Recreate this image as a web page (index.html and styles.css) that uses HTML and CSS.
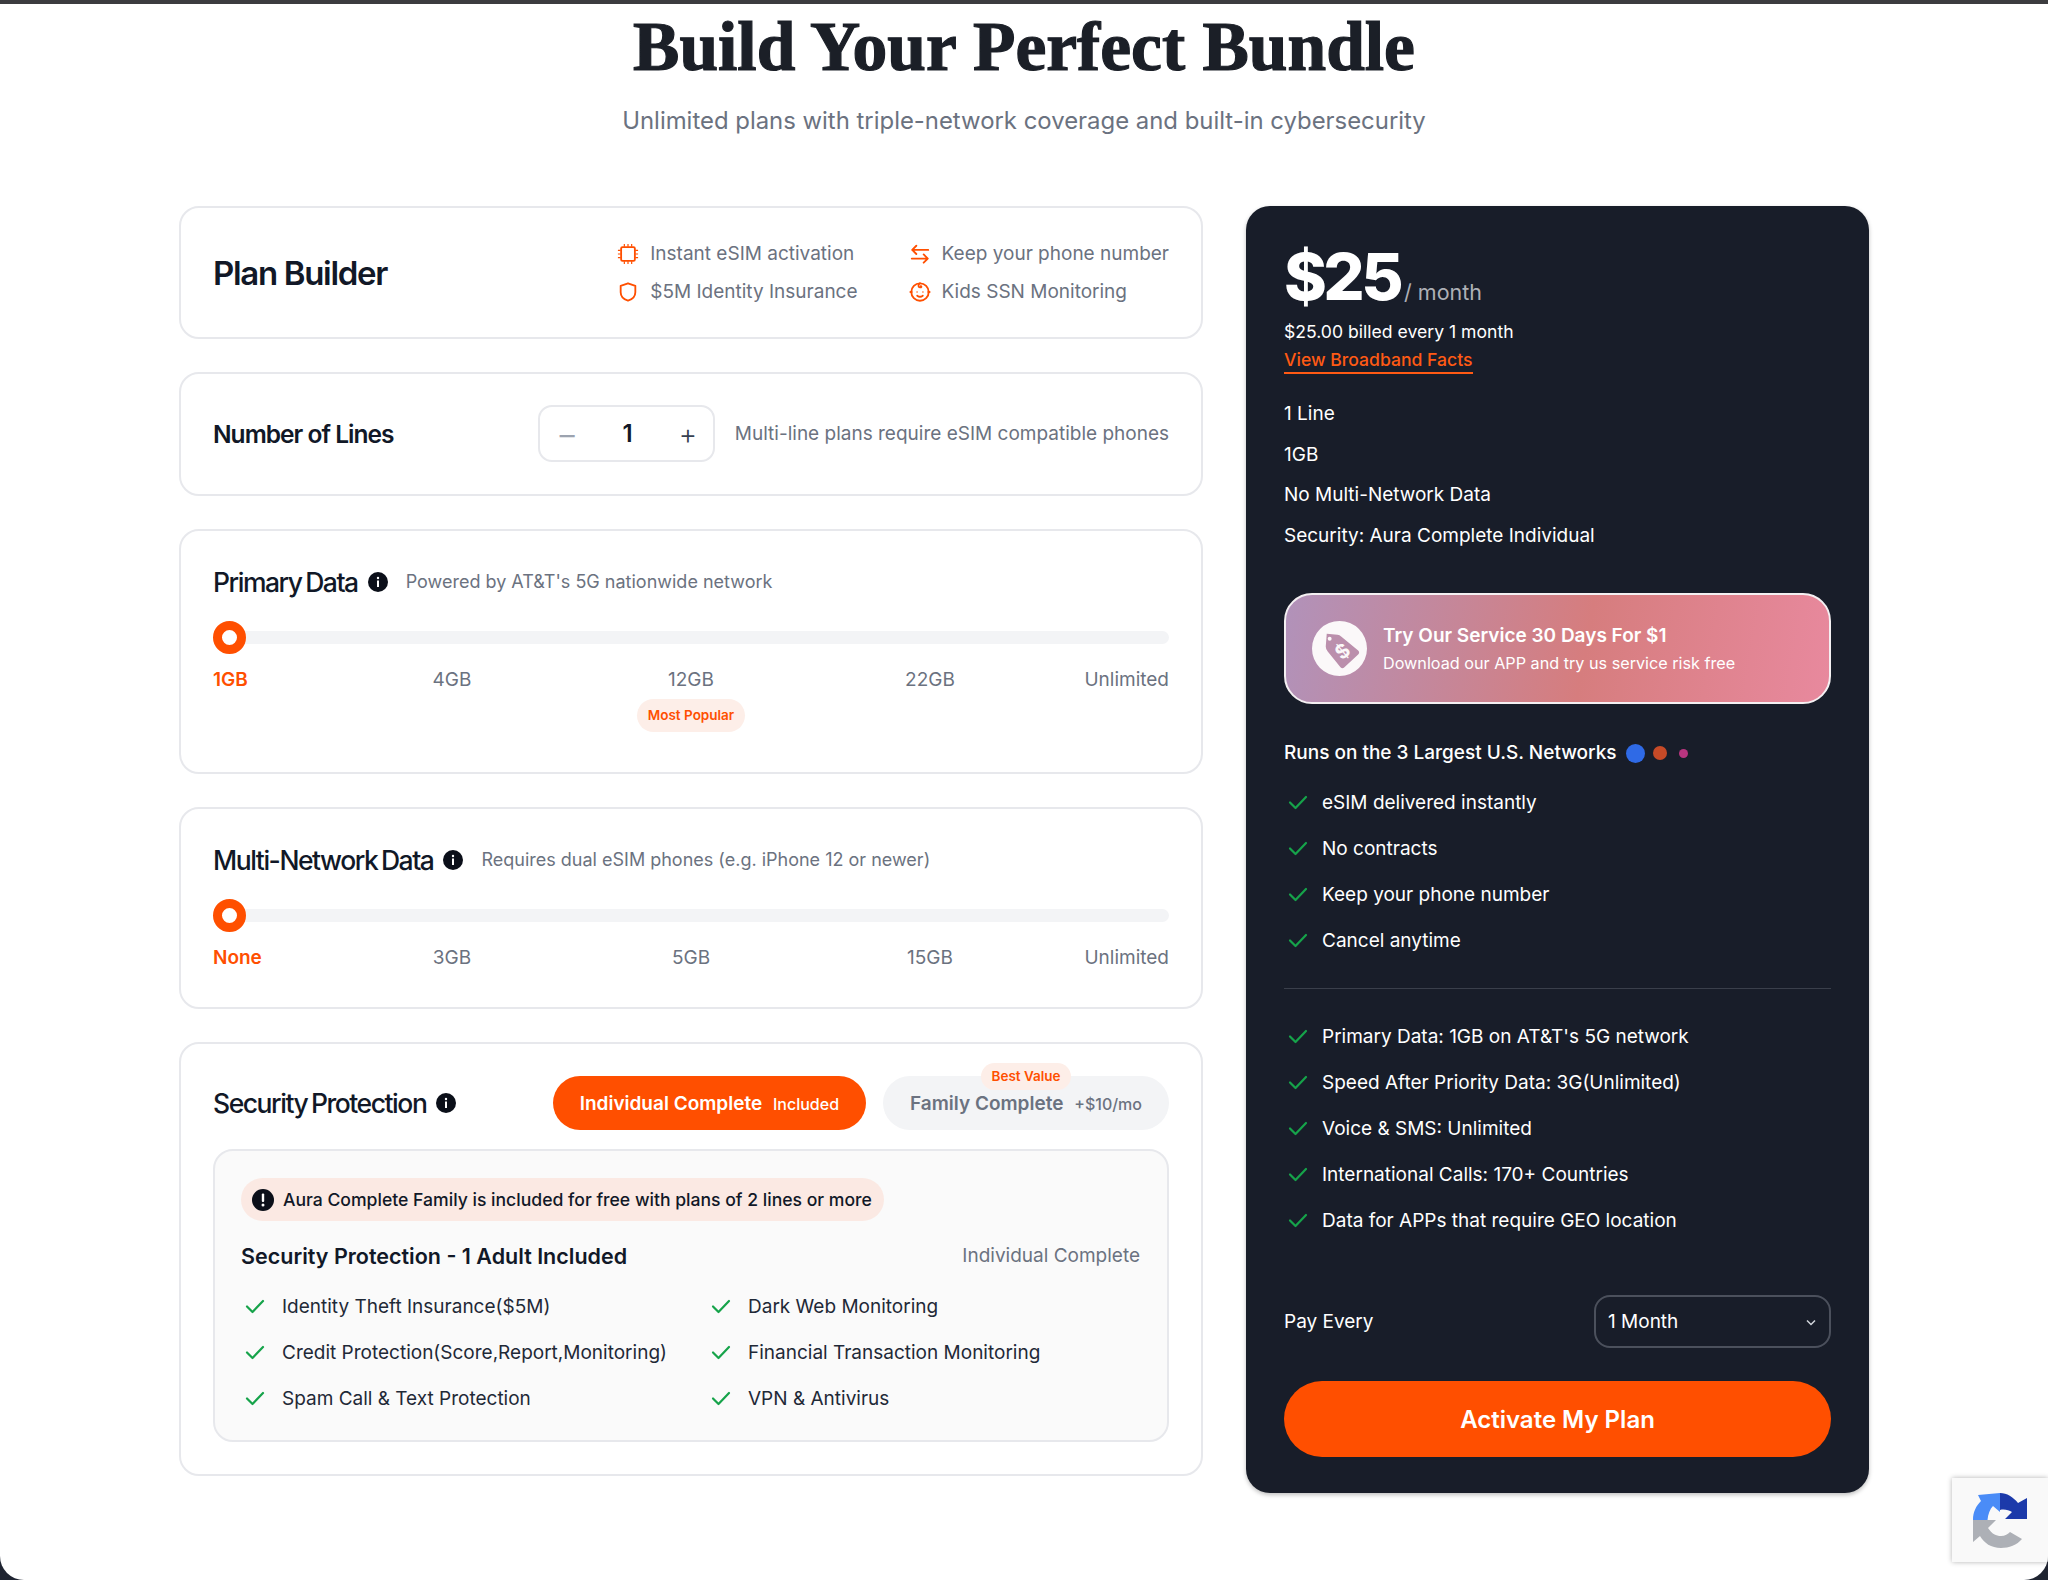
FILE: index.html
```html
<!DOCTYPE html>
<html lang="en">
<head>
  <meta charset="UTF-8">
  <meta name="viewport" content="width=device-width, initial-scale=1.0">
  <title>Build Your Perfect Bundle</title>
  <link rel="stylesheet" href="styles.css">
</head>
<body>
  <div class="page">
    <header class="hero">
      <h1>Build Your Perfect Bundle</h1>
      <p>Unlimited plans with triple-network coverage and built-in cybersecurity</p>
    </header>

    <main class="layout">
      <div class="builder">
        <section class="card plan-card">
          <h2 class="plan-title">Plan Builder</h2>
          <ul class="perks">
            <li>
              <svg class="perk-icon" viewBox="0 0 24 24"><rect x="4.500" y="4.500" width="15" height="15" rx="1.500"/><path class="pins" d="M8 1v3M12 1v3M16 1v3M8 20v3M12 20v3M16 20v3M1 8h3M1 12h3M1 16h3M20 8h3M20 12h3M20 16h3"/></svg>
              Instant eSIM activation
            </li>
            <li>
              <svg class="perk-icon" viewBox="0 0 24 24"><path d="M21 7.500H3.500M8 3 3.500 7.500 8 12M3 17h17.500M16 12.500l4.500 4.500L16 21.500"/></svg>
              Keep your phone number
            </li>
            <li>
              <svg class="perk-icon" viewBox="0 0 24 24"><path d="M12 2.500l8 2.800v7c0 4.800-3.400 7.800-8 9.200-4.600-1.400-8-4.400-8-9.200v-7z"/></svg>
              $5M Identity Insurance
            </li>
            <li>
              <svg class="perk-icon" viewBox="0 0 24 24"><circle cx="12" cy="12" r="9.500"/><path d="M12 2.500c-2 1.500-2.500 4 0 4.500 1.500.2 2-1 1-1.500M9 16c1.800 1.400 4.200 1.400 6 0M3 12H1.500M22.500 12H21"/><circle class="dot" cx="8.800" cy="12" r=".8"/><circle class="dot" cx="15.200" cy="12" r=".8"/></svg>
              Kids SSN Monitoring
            </li>
          </ul>
        </section>

        <section class="card lines-card">
          <h3 class="lines-title">Number of Lines</h3>
          <div class="stepper">
            <span class="step-btn muted">&minus;</span>
            <span class="step-value">1</span>
            <span class="step-btn">+</span>
          </div>
          <p class="hint">Multi-line plans require eSIM compatible phones</p>
        </section>

        <section class="card">
          <div class="section-head">
            <h3>Primary Data</h3>
            <svg class="info" viewBox="0 0 20 20"><circle cx="10" cy="10" r="10"/><rect class="glyph" x="9" y="8.500" width="2" height="6.500"/><circle class="glyph" cx="10" cy="6" r="1.200"/></svg>
            <span class="hint">Powered by AT&amp;T's 5G nationwide network</span>
          </div>
          <div class="slider">
            <div class="track"></div>
            <div class="thumb"></div>
          </div>
          <div class="ticks">
            <div class="tick active">1GB</div>
            <div class="tick">4GB</div>
            <div class="tick">12GB<span class="badge">Most Popular</span></div>
            <div class="tick">22GB</div>
            <div class="tick">Unlimited</div>
          </div>
        </section>

        <section class="card">
          <div class="section-head">
            <h3>Multi-Network Data</h3>
            <svg class="info" viewBox="0 0 20 20"><circle cx="10" cy="10" r="10"/><rect class="glyph" x="9" y="8.500" width="2" height="6.500"/><circle class="glyph" cx="10" cy="6" r="1.200"/></svg>
            <span class="hint">Requires dual eSIM phones (e.g. iPhone 12 or newer)</span>
          </div>
          <div class="slider">
            <div class="track"></div>
            <div class="thumb"></div>
          </div>
          <div class="ticks">
            <div class="tick active">None</div>
            <div class="tick">3GB</div>
            <div class="tick">5GB</div>
            <div class="tick">15GB</div>
            <div class="tick">Unlimited</div>
          </div>
        </section>

        <section class="card security-card">
          <div class="security-head">
            <div class="section-head">
              <h3>Security Protection</h3>
              <svg class="info" viewBox="0 0 20 20"><circle cx="10" cy="10" r="10"/><rect class="glyph" x="9" y="8.500" width="2" height="6.500"/><circle class="glyph" cx="10" cy="6" r="1.200"/></svg>
            </div>
            <div class="options">
              <div class="option selected">Individual Complete <small>Included</small></div>
              <div class="option">
                Family Complete <small>+$10/mo</small>
                <span class="best">Best Value</span>
              </div>
            </div>
          </div>

          <div class="security-box">
            <div class="notice">
              <svg class="notice-icon" viewBox="0 0 22 22"><circle cx="11" cy="11" r="11"/><rect class="glyph" x="9.800" y="4.500" width="2.400" height="8.500" rx="1"/><circle class="glyph" cx="11" cy="16" r="1.500"/></svg>
              Aura Complete Family is included for free with plans of 2 lines or more
            </div>
            <div class="box-head">
              <h4>Security Protection - 1 Adult Included</h4>
              <span class="hint">Individual Complete</span>
            </div>
            <ul class="features">
              <li><svg class="check" viewBox="0 0 20 20"><path d="M2 10.500l5.500 5.500L18 5"/></svg>Identity Theft Insurance($5M)</li>
              <li><svg class="check" viewBox="0 0 20 20"><path d="M2 10.500l5.500 5.500L18 5"/></svg>Dark Web Monitoring</li>
              <li><svg class="check" viewBox="0 0 20 20"><path d="M2 10.500l5.500 5.500L18 5"/></svg>Credit Protection(Score,Report,Monitoring)</li>
              <li><svg class="check" viewBox="0 0 20 20"><path d="M2 10.500l5.500 5.500L18 5"/></svg>Financial Transaction Monitoring</li>
              <li><svg class="check" viewBox="0 0 20 20"><path d="M2 10.500l5.500 5.500L18 5"/></svg>Spam Call &amp; Text Protection</li>
              <li><svg class="check" viewBox="0 0 20 20"><path d="M2 10.500l5.500 5.500L18 5"/></svg>VPN &amp; Antivirus</li>
            </ul>
          </div>
        </section>
      </div>

      <aside class="summary">
        <div class="price"><strong>$25</strong><span>/ month</span></div>
        <p class="billed">$25.00 billed every 1 month</p>
        <a class="facts" href="#">View Broadband Facts</a>

        <ul class="picks">
          <li>1 Line</li>
          <li>1GB</li>
          <li>No Multi-Network Data</li>
          <li>Security: Aura Complete Individual</li>
        </ul>

        <div class="promo">
          <svg class="promo-icon" viewBox="0 0 56 56">
            <circle class="promo-disc" cx="28" cy="28" r="28"/>
            <path class="promo-tag" d="M15 13L26 14Q28 14 30 16L47 30Q49 32 47 34L33 47Q31 49 29 47L16 31Q14 29 14 26z"/>
            <circle class="promo-disc" cx="18" cy="18" r="2"/>
            <text class="promo-sign" x="31" y="38" text-anchor="middle" transform="rotate(-40 31 31)">$</text>
          </svg>
          <div>
            <div class="promo-title">Try Our Service 30 Days For $1</div>
            <div class="promo-sub">Download our APP and try us service risk free</div>
          </div>
        </div>

        <div class="networks">
          Runs on the 3 Largest U.S. Networks
          <i class="net net-a"></i><i class="net net-b"></i><i class="net net-c"></i>
        </div>

        <ul class="checks">
          <li><svg class="check" viewBox="0 0 20 20"><path d="M2 10.500l5.500 5.500L18 5"/></svg>eSIM delivered instantly</li>
          <li><svg class="check" viewBox="0 0 20 20"><path d="M2 10.500l5.500 5.500L18 5"/></svg>No contracts</li>
          <li><svg class="check" viewBox="0 0 20 20"><path d="M2 10.500l5.500 5.500L18 5"/></svg>Keep your phone number</li>
          <li><svg class="check" viewBox="0 0 20 20"><path d="M2 10.500l5.500 5.500L18 5"/></svg>Cancel anytime</li>
        </ul>

        <hr class="rule">

        <ul class="checks">
          <li><svg class="check" viewBox="0 0 20 20"><path d="M2 10.500l5.500 5.500L18 5"/></svg>Primary Data: 1GB on AT&amp;T's 5G network</li>
          <li><svg class="check" viewBox="0 0 20 20"><path d="M2 10.500l5.500 5.500L18 5"/></svg>Speed After Priority Data: 3G(Unlimited)</li>
          <li><svg class="check" viewBox="0 0 20 20"><path d="M2 10.500l5.500 5.500L18 5"/></svg>Voice &amp; SMS: Unlimited</li>
          <li><svg class="check" viewBox="0 0 20 20"><path d="M2 10.500l5.500 5.500L18 5"/></svg>International Calls: 170+ Countries</li>
          <li><svg class="check" viewBox="0 0 20 20"><path d="M2 10.500l5.500 5.500L18 5"/></svg>Data for APPs that require GEO location</li>
        </ul>

        <div class="pay-row">
          <span>Pay Every</span>
          <div class="select">
            1 Month
            <svg class="chevron" viewBox="0 0 12 12"><path d="M2 4.500l4 4 4-4"/></svg>
          </div>
        </div>

        <button class="activate" type="button">Activate My Plan</button>
      </aside>
    </main>

    <div class="captcha">
      <svg viewBox="0 0 56 56" width="56" height="56">
        <path fill="#4a8cf7" d="M0 28C0 20 3 14 8 9L5 3 27 1V20L20 14C17 17 15 22 14.500 28z"/>
        <path fill="#1c3aaa" d="M27 1C34 1 40 5 45 11L54 6V27H32L39 20C36 18 31 17 27 18z"/>
        <path fill="#adb0b6" d="M0 28H23L15 36C19 42 23 44 28 44 32 44 35 42 37 40L49 47C44 53 36 56 28 56 18 56 11 51 7 44L0 50z"/>
      </svg>
    </div>
  </div>
</body>
</html>
```

FILE: styles.css
```css
* {
  box-sizing: border-box;
}
html, body {
  margin: 0;
  padding: 0;
}
body {
  background-color: #1f2431;
  color: #111827;
  font-family: Inter, 'Noto Sans', sans-serif;
  font-size: 19px;
  line-height: 28px;
}
ul {
  list-style: none;
  margin: 0;
  padding: 0;
}
h1, h2, h3, h4, p {
  margin: 0;
}
.page {
  position: relative;
  height: 1580px;
  overflow: hidden;
  background-color: white;
  border-top: 4px solid #3c3c3f;
  border-radius: 0 0 24px 24px;
}

.hero {
  text-align: center;
  padding-top: 6px;
}
.hero h1 {
  font-family: 'Liberation Serif', serif;
  font-size: 69.500px;
  line-height: 74px;
  font-weight: 700;
  color: #1b1f27;
  -webkit-text-stroke: 1.200px #1b1f27;
}
.hero p {
  margin-top: 20px;
  font-size: 23.900px;
  line-height: 34px;
  color: #6b7280;
}

.layout {
  display: flex;
  align-items: flex-start;
  gap: 43px;
  margin: 68px 179px 0;
}
.builder {
  display: flex;
  flex-direction: column;
  gap: 33px;
  width: 1024px;
  flex: none;
}
.card {
  border: 2px solid #e7e8ec;
  border-radius: 20px;
  padding: 31px 32px;
  background-color: white;
}

.plan-card {
  display: flex;
  align-items: center;
  justify-content: space-between;
}
.plan-title {
  font-size: 33px;
  line-height: 40px;
  font-weight: 600;
  letter-spacing: -0.04em;
}
.perks {
  display: grid;
  grid-template-columns: auto auto;
  column-gap: 51px;
  row-gap: 10px;
  margin-top: 1px;
  color: #6b7280;
}
.perks li {
  display: flex;
  align-items: center;
  gap: 11px;
}
.perk-icon {
  width: 22px;
  height: 22px;
  fill: none;
  stroke: #ff4f00;
  stroke-width: 2;
  stroke-linecap: round;
  stroke-linejoin: round;
}
.perk-icon .dot {
  fill: #ff4f00;
  stroke: none;
}
.perk-icon .pins {
  stroke-width: 1.300;
  stroke-linecap: butt;
}

.lines-card {
  display: flex;
  align-items: center;
  padding-bottom: 32px;
}
.lines-title {
  flex: none;
  width: 325px;
  font-size: 24.500px;
  font-weight: 600;
  letter-spacing: -0.04em;
}
.stepper {
  flex: none;
  display: flex;
  align-items: center;
  justify-content: space-between;
  width: 177px;
  height: 57px;
  padding: 0 16px;
  border: 2px solid #e7e8ec;
  border-radius: 14px;
}
.step-btn {
  font-size: 28px;
  font-weight: 300;
  color: #374151;
}
.step-btn.muted {
  color: #9ca3af;
  font-size: 34px;
}
.step-value {
  margin-left: -2px;
  font-size: 24px;
  font-weight: 600;
}
.hint {
  color: #6b7280;
  font-size: 18px;
}
.lines-card .hint {
  margin-left: auto;
  font-size: 19px;
}
.box-head .hint {
  font-size: 19px;
}

.section-head {
  display: flex;
  align-items: center;
  height: 40px;
}
.section-head h3 {
  font-size: 26.500px;
  font-weight: 500;
  letter-spacing: -0.055em;
  word-spacing: -2px;
}
.info {
  width: 20px;
  height: 20px;
  margin: 0 18px 0 10px;
  fill: #0b0f19;
}
.info .glyph, .notice-icon .glyph {
  fill: white;
}

.slider {
  position: relative;
  display: flex;
  align-items: center;
  height: 33px;
  margin-top: 19px;
}
.track {
  flex: 1;
  height: 13px;
  border-radius: 7px;
  background-color: #f3f4f6;
}
.thumb {
  position: absolute;
  left: 0;
  top: 0;
  width: 33px;
  height: 33px;
  border: 9px solid #ff4f00;
  border-radius: 50%;
  background-color: white;
}
.ticks {
  display: grid;
  grid-template-columns: 1fr 2fr 2fr 2fr 1fr;
  margin: 12px 0 4px;
  color: #6b7280;
  text-align: center;
}
.tick:first-child {
  text-align: left;
}
.tick:last-child {
  text-align: right;
}
.tick.active {
  color: #ff4f00;
  font-weight: 600;
}
.badge {
  display: block;
  width: 108px;
  margin: 5px auto;
  border-radius: 17px;
  background-color: #fdeee8;
  color: #ff4f00;
  font-size: 13.500px;
  font-weight: 600;
  line-height: 33px;
}

.security-card {
  padding-top: 32px;
  padding-bottom: 32px;
}
.security-head {
  display: flex;
  align-items: center;
  justify-content: space-between;
  height: 54px;
}
.options {
  display: flex;
  gap: 17px;
}
.option {
  position: relative;
  height: 54px;
  padding: 0 27px;
  border-radius: 27px;
  background-color: #f3f4f6;
  color: #6b7280;
  font-weight: 600;
  line-height: 55px;
  white-space: nowrap;
}
.option small {
  margin-left: 6px;
  font-size: 16px;
  font-weight: 500;
}
.option.selected {
  background-color: #ff4f00;
  color: white;
}
.best {
  position: absolute;
  left: 98px;
  top: -13px;
  width: 90px;
  height: 27px;
  border-radius: 14px;
  background-color: #fdeee8;
  color: #ff4f00;
  font-size: 13.500px;
  line-height: 27px;
  text-align: center;
}
.security-box {
  margin-top: 19px;
  padding: 27px 26px 27px;
  border: 2px solid #e7e8ec;
  border-radius: 20px;
  background-color: #fafafa;
}
.notice {
  display: inline-flex;
  align-items: center;
  gap: 9px;
  height: 43px;
  padding: 0 12px 0 11px;
  border-radius: 22px;
  background-color: #fbe9e3;
  font-size: 17.600px;
  font-weight: 500;
  vertical-align: top;
}
.notice-icon {
  width: 22px;
  height: 22px;
  fill: #0b0f19;
}
.box-head {
  display: flex;
  align-items: center;
  justify-content: space-between;
  margin-top: 21px;
  padding-right: 1px;
}
.box-head h4 {
  font-size: 21.500px;
  font-weight: 600;
}
.features {
  display: grid;
  grid-template-columns: 466px 1fr;
  row-gap: 18px;
  margin-top: 23px;
  color: #1f2937;
}
.features li {
  display: flex;
  align-items: center;
  gap: 17px;
  padding-left: 4px;
}
.check {
  flex: none;
  width: 20px;
  height: 20px;
  margin-top: -2px;
  fill: none;
  stroke: #16a34a;
  stroke-width: 2.200;
  stroke-linecap: round;
  stroke-linejoin: round;
}

.summary {
  flex: 1;
  height: 1287px;
  padding: 35px 38px 38px;
  border-radius: 24px;
  background-color: #181d29;
  color: white;
  box-shadow: 0 2px 4px rgba(0, 0, 0, 0.25);
}
.price {
  display: flex;
  align-items: baseline;
  height: 72px;
}
.price strong {
  font-size: 65px;
  line-height: 72px;
  font-weight: 800;
  letter-spacing: -0.055em;
}
.price span {
  margin-left: 4px;
  font-size: 21.500px;
  color: #adb0b6;
}
.billed {
  margin-top: 5px;
  font-size: 17.600px;
}
.facts {
  display: inline-block;
  color: #ff5a14;
  font-size: 17.600px;
  font-weight: 500;
  line-height: 24px;
  margin-top: 2px;
  border-bottom: 2px solid #ff5a14;
  text-decoration: none;
}
.picks {
  display: grid;
  row-gap: 12.700px;
  margin-top: 26px;
}
.promo {
  display: flex;
  align-items: center;
  gap: 16px;
  height: 111px;
  margin-top: 43px;
  padding-left: 26px;
  border: 2px solid #f4f0f2;
  border-radius: 28px;
  background: linear-gradient(100deg, #b192ba 0%, #d67d7e 55%, #e8899e 100%);
}
.promo-icon {
  width: 55px;
  height: 55px;
  flex: none;
}
.promo-disc {
  fill: #fbf8f9;
}
.promo-tag {
  fill: #bb8fac;
}
.promo-sign {
  fill: #fbf8f9;
  font-size: 20px;
  font-weight: 700;
}
.promo-title {
  font-size: 19px;
  font-weight: 600;
  line-height: 28px;
}
.promo-sub {
  font-size: 16.200px;
  line-height: 26px;
}
.networks {
  display: flex;
  align-items: center;
  margin-top: 35px;
  font-weight: 500;
}
.net {
  display: block;
  border-radius: 50%;
}
.net-a {
  width: 19px;
  height: 19px;
  margin-left: 9px;
  background-color: #2f6ae6;
}
.net-b {
  width: 14px;
  height: 14px;
  margin-left: 8px;
  background-color: #c64a27;
}
.net-c {
  width: 9px;
  height: 9px;
  margin-left: 12px;
  background-color: #b8357f;
}
.checks {
  display: grid;
  row-gap: 18px;
  margin-top: 22px;
}
.checks li {
  display: flex;
  align-items: center;
  gap: 14px;
  padding-left: 4px;
}
.rule {
  height: 1px;
  margin: 33px 0 0;
  border: none;
  background-color: #3a3f4b;
}
.rule + .checks {
  margin-top: 34px;
}
.pay-row {
  display: flex;
  align-items: center;
  justify-content: space-between;
  margin-top: 60px;
}
.select {
  display: flex;
  align-items: center;
  justify-content: space-between;
  width: 237px;
  height: 53px;
  padding: 0 12px;
  border: 2px solid #4b505c;
  border-radius: 16px;
}
.chevron {
  width: 12px;
  height: 12px;
  fill: none;
  stroke: #d1d5db;
  stroke-width: 1.500;
}
.activate {
  display: block;
  width: 100%;
  height: 76px;
  margin-top: 33px;
  border: none;
  border-radius: 38px;
  background-color: #ff4f00;
  color: white;
  font-family: inherit;
  font-size: 24px;
  font-weight: 600;
}

.captcha {
  position: absolute;
  right: 0;
  top: 1474px;
  width: 96px;
  height: 84px;
  padding: 14px 0 0 21px;
  background-color: #f9f9f9;
  box-shadow: 0 0 5px rgba(0, 0, 0, 0.3);
}
```
